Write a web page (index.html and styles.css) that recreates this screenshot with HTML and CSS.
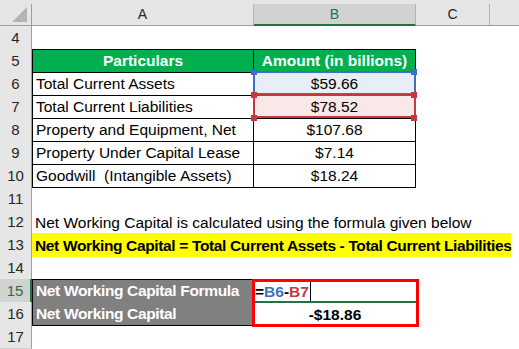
FILE: index.html
```html
<!DOCTYPE html>
<html lang="en">
<head>
    <meta charset="UTF-8">
    <title>Net Working Capital</title>
    <link rel="stylesheet" href="styles.css">
</head>
<body>

<div class="sheet">
    <div class="row heads">
        <div class="corner"><span class="tri"></span></div>
        <div class="ch">A</div>
        <div class="ch sel">B</div>
        <div class="ch">C</div>
        <div class="ch last"></div>
    </div>

    <div class="row"><div class="rh">4</div></div>

    <div class="row">
        <div class="rh">5</div>
        <div class="c t top first th">Particulars</div>
        <div class="c t top th">Amount (in billions)</div>
    </div>
    <div class="row">
        <div class="rh">6</div>
        <div class="c t first">Total Current Assets</div>
        <div class="c t num ref blue">$59.66</div>
    </div>
    <div class="row">
        <div class="rh">7</div>
        <div class="c t first">Total Current Liabilities</div>
        <div class="c t num ref red">$78.52</div>
    </div>
    <div class="row">
        <div class="rh">8</div>
        <div class="c t first">Property and Equipment, Net</div>
        <div class="c t num">$107.68</div>
    </div>
    <div class="row">
        <div class="rh">9</div>
        <div class="c t first">Property Under Capital Lease</div>
        <div class="c t num">$7.14</div>
    </div>
    <div class="row">
        <div class="rh">10</div>
        <div class="c t first">Goodwill&nbsp; (Intangible Assets)</div>
        <div class="c t num">$18.24</div>
    </div>

    <div class="row"><div class="rh">11</div></div>

    <div class="row">
        <div class="rh">12</div>
        <div class="c wide">Net Working Capital is calculated using the formula given below</div>
    </div>
    <div class="row">
        <div class="rh">13</div>
        <div class="c wide hl">Net Working Capital = Total Current Assets - Total Current Liabilities</div>
    </div>

    <div class="row"><div class="rh">14</div></div>

    <div class="row">
        <div class="rh active">15</div>
        <div class="c t top first grey">Net Working Capital Formula</div>
        <div class="c edit"><b>=</b><b class="r-blue">B6</b><b>-</b><b class="r-red">B7</b><span class="caret"></span></div>
    </div>
    <div class="row">
        <div class="rh">16</div>
        <div class="c t first grey">Net Working Capital</div>
        <div class="c num bold">-$18.86</div>
    </div>

    <div class="row"><div class="rh">17</div></div>

    <div class="mark"></div>
</div>

</body>
</html>
```

FILE: styles.css
```css
/* Spreadsheet look */
body { margin: 0; background: #fff; font-family: 'Liberation Sans', Arial, sans-serif; color: #000; }
.sheet { position: relative; width: 519px; height: 349px; overflow: hidden; background: #fff; }
.row { display: grid; grid-template-columns: 32px 222px 162px 74px 29px; height: 23px; }

/* column headers */
.heads { height: 26px; background: #e6e6e6; border-bottom: 1px solid #9e9e9e; box-sizing: border-box; }
.corner { position: relative; border-right: 1px solid #9e9e9e; margin-top: 4px; }
.corner .tri { position: absolute; right: 4px; bottom: 3px; width: 0; height: 0; border-left: 15px solid transparent; border-bottom: 15px solid #b4b4b4; }
.ch { margin-top: 4px; border-right: 1px solid #b4b4b4; font-size: 14px; color: #262626; text-align: center; line-height: 20px; }
.ch.sel { background: #d2d2d2; color: #217346; border-bottom: 2px solid #217346; margin-bottom: -1px; }
.ch.last { border-right: none; }

/* row headers */
.rh { background: #e6e6e6; border-right: 1px solid #9e9e9e; border-bottom: 1px solid #d0d0d0; box-sizing: border-box; font-size: 15px; color: #262626; text-align: center; line-height: 23px; }
.rh.active { background: #d2d2d2; color: #217346; border-right: 2px solid #217346; }

/* cells */
.c { box-sizing: border-box; font-size: 15.5px; line-height: 23px; padding: 1px 3px 0; white-space: nowrap; }
.t { border-right: 1px solid #000; border-bottom: 1px solid #000; line-height: 21px; }
.t.top { border-top: 1px solid #000; line-height: 20px; }
.t.first { border-left: 1px solid #000; }
.th { background: #00b050; color: #fff; font-weight: bold; text-align: center; }
.num { text-align: center; }
.bold { font-weight: bold; }
.grey { background: #808080; color: #fff; font-weight: bold; letter-spacing: -0.35px; }
.wide { grid-column: 2 / -1; }
.hl { width: 479px; background: #ffff00; font-weight: bold; letter-spacing: -0.35px; }

/* formula reference boxes */
.ref { position: relative; }
.ref::before { content: ""; position: absolute; left: -1px; top: -1px; width: 163px; height: 24px; border: 2px solid; box-sizing: border-box; }
.ref::after { content: ""; position: absolute; z-index: 1; left: -3px; top: -3px; width: 6px; height: 6px; }
.blue { background: #e8eef8; }
.blue::before { border-color: #3d6fc4; }
.blue::after { background: #3d6fc4; box-shadow: 160px 0 #3d6fc4, 0 23px #3d6fc4, 160px 23px #3d6fc4; }
.red { background: #f8e8e8; }
.red::before { border-color: #c4393d; }
.red::after { z-index: 2; background: #c4393d; box-shadow: 160px 0 #c4393d, 0 23px #c4393d, 160px 23px #c4393d; }

/* active cell in edit mode */
.edit { box-shadow: inset 0 -2px #217346; padding-left: 1px; }
.r-blue { color: #3d6fc4; }
.r-red { color: #c4393d; }
.caret { display: inline-block; width: 1px; height: 19px; background: #000; vertical-align: -4px; margin-left: 1px; }

/* red annotation frame */
.mark { position: absolute; z-index: 3; left: 252px; top: 279px; width: 167px; height: 48px; border: 3px solid #ff0000; box-sizing: border-box; }
```
